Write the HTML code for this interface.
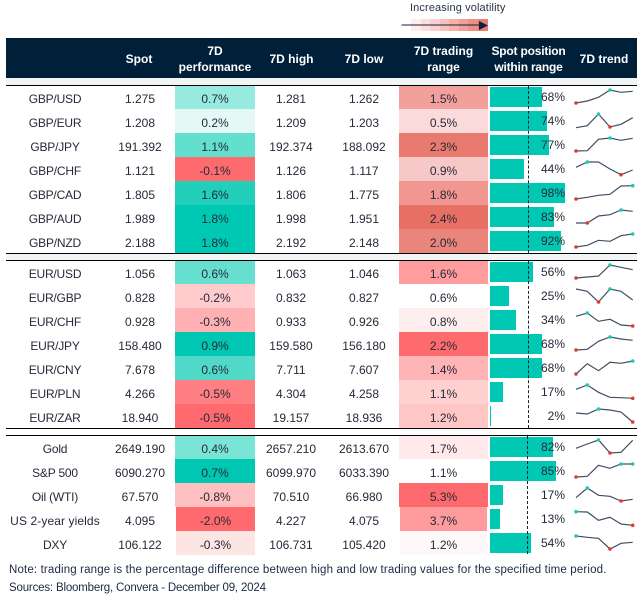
<!DOCTYPE html>
<html><head><meta charset="utf-8">
<style>
html,body{margin:0;padding:0;background:#fff;}
body{width:637px;height:599px;position:relative;overflow:hidden;font-family:"Liberation Sans",sans-serif;font-size:12px;color:#252a38;}
.h{position:absolute;top:38px;left:6px;width:631px;height:40px;background:#002039;}
.t{position:absolute;color:#fff;font-weight:bold;text-align:center;line-height:16px;white-space:nowrap;transform:translateX(-50%);}
.l{position:absolute;background:#000;left:6px;width:631px;height:1px;}
.r{position:absolute;left:0;width:637px;height:24px;}
.r span{position:absolute;white-space:nowrap;}
.a,.s,.g,.w,.p,.v{top:2px;height:24px;line-height:24px;text-align:center;}
.a{left:5px;width:100px;letter-spacing:-.2px;}
.s{left:100px;width:80px;}
.p{left:175px;width:80px;top:0;line-height:28px;height:24px;}
.g{left:251px;width:80px;}
.w{left:324px;width:80px;}
.v{left:399px;width:89px;top:0;line-height:28px;height:24px;}
.f .p,.f .v{top:1px;height:23px;line-height:26px;}
.b{left:490px;top:2px;height:20px;background:#00c8b3;}
.k{right:72px;top:0;line-height:24px;height:24px;}
.d{position:absolute;width:0;border-left:1px dashed #14233a;}
.n{position:absolute;left:9px;white-space:nowrap;color:#1c2a44;line-height:18px;}
svg{position:absolute;left:0;top:0;}
polyline{fill:none;stroke:#3f4f60;stroke-width:1.2;}
.x{fill:#e23b2e;}.y{fill:#1fc7b5;}
</style></head><body>

<div style="position:absolute;left:410px;top:1px;line-height:15px;white-space:nowrap;color:#2a3444;font-size:11px;letter-spacing:.12px">Increasing volatility</div>
<div style="position:absolute;top:19px;height:12px;left:411px;width:10px;background:#fdeeec"></div>
<div style="position:absolute;top:19px;height:12px;left:421px;width:9px;background:#fbdfdc"></div>
<div style="position:absolute;top:19px;height:12px;left:430px;width:10px;background:#f9d0cc"></div>
<div style="position:absolute;top:19px;height:12px;left:440px;width:9px;background:#f7c1bc"></div>
<div style="position:absolute;top:19px;height:12px;left:449px;width:10px;background:#f5b0aa"></div>
<div style="position:absolute;top:19px;height:12px;left:459px;width:9px;background:#f29f98"></div>
<div style="position:absolute;top:19px;height:12px;left:468px;width:10px;background:#ee8e85"></div>
<div style="position:absolute;top:19px;height:12px;left:478px;width:10px;background:#ea7d72"></div>

<div class="h"></div>
<div class="t" style="left:139px;top:51px">Spot</div>
<div class="t" style="left:215px;top:43px">7D<br>performance</div>
<div class="t" style="left:291.5px;top:51px">7D high</div>
<div class="t" style="left:364px;top:51px">7D low</div>
<div class="t" style="left:443.5px;top:43px">7D trading<br>range</div>
<div class="t" style="left:528.5px;top:43px;letter-spacing:-.2px">Spot position<br>within range</div>
<div class="t" style="left:604px;top:51px">7D trend</div>

<div style="position:absolute;left:6px;top:78px;width:631px;height:7px;background:#f2f5f5"></div>
<div style="position:absolute;left:6px;top:254px;width:631px;height:6px;background:#f2f5f5"></div>

<div class="r f" style="top:85px"><span class="a">GBP/USD</span><span class="s">1.275</span><span class="p" style="background:#97eadf">0.7%</span><span class="g">1.281</span><span class="w">1.262</span><span class="v" style="background:#f2a09b">1.5%</span><span class="b" style="width:52px"></span></div>
<div class="r" style="top:109px"><span class="a">GBP/EUR</span><span class="s">1.208</span><span class="p" style="background:#e4f9f6">0.2%</span><span class="g">1.209</span><span class="w">1.203</span><span class="v" style="background:#fadadb">0.5%</span><span class="b" style="width:57px"></span></div>
<div class="r" style="top:133px"><span class="a">GBP/JPY</span><span class="s">191.392</span><span class="p" style="background:#62dfcf">1.1%</span><span class="g">192.374</span><span class="w">188.092</span><span class="v" style="background:#e97a6f">2.3%</span><span class="b" style="width:59px"></span></div>
<div class="r" style="top:157px"><span class="a">GBP/CHF</span><span class="s">1.121</span><span class="p" style="background:#fd6b6e">-0.1%</span><span class="g">1.126</span><span class="w">1.117</span><span class="v" style="background:#f6c9c8">0.9%</span><span class="b" style="width:34px"></span></div>
<div class="r" style="top:181px"><span class="a">GBP/CAD</span><span class="s">1.805</span><span class="p" style="background:#22cfba">1.6%</span><span class="g">1.806</span><span class="w">1.775</span><span class="v" style="background:#f19690">1.8%</span><span class="b" style="width:75px"></span></div>
<div class="r" style="top:205px"><span class="a">GBP/AUD</span><span class="s">1.989</span><span class="p" style="background:#00c9b3">1.8%</span><span class="g">1.998</span><span class="w">1.951</span><span class="v" style="background:#e76f63">2.4%</span><span class="b" style="width:64px"></span></div>
<div class="r" style="top:229px"><span class="a">GBP/NZD</span><span class="s">2.188</span><span class="p" style="background:#00c9b3">1.8%</span><span class="g">2.192</span><span class="w">2.148</span><span class="v" style="background:#ea857b">2.0%</span><span class="b" style="width:71px"></span></div>

<div class="r f" style="top:260px"><span class="a">EUR/USD</span><span class="s">1.056</span><span class="p" style="background:#66dfd0">0.6%</span><span class="g">1.063</span><span class="w">1.046</span><span class="v" style="background:#ff9c9e">1.6%</span><span class="b" style="width:43px"></span></div>
<div class="r" style="top:284px"><span class="a">EUR/GBP</span><span class="s">0.828</span><span class="p" style="background:#ffcbcc">-0.2%</span><span class="g">0.832</span><span class="w">0.827</span><span class="v" style="background:#fff">0.6%</span><span class="b" style="width:19px"></span></div>
<div class="r" style="top:308px"><span class="a">EUR/CHF</span><span class="s">0.928</span><span class="p" style="background:#ffb0b2">-0.3%</span><span class="g">0.933</span><span class="w">0.926</span><span class="v" style="background:#ffeeee">0.8%</span><span class="b" style="width:26px"></span></div>
<div class="r" style="top:332px"><span class="a">EUR/JPY</span><span class="s">158.480</span><span class="p" style="background:#00c7b2">0.9%</span><span class="g">159.580</span><span class="w">156.180</span><span class="v" style="background:#fe6b6f">2.2%</span><span class="b" style="width:52px"></span></div>
<div class="r" style="top:356px"><span class="a">EUR/CNY</span><span class="s">7.678</span><span class="p" style="background:#50d9c8">0.6%</span><span class="g">7.711</span><span class="w">7.607</span><span class="v" style="background:#feb3b5">1.4%</span><span class="b" style="width:52px"></span></div>
<div class="r" style="top:380px"><span class="a">EUR/PLN</span><span class="s">4.266</span><span class="p" style="background:#ff7f82">-0.5%</span><span class="g">4.304</span><span class="w">4.258</span><span class="v" style="background:#ffd0d0">1.1%</span><span class="b" style="width:13px"></span></div>
<div class="r" style="top:404px"><span class="a">EUR/ZAR</span><span class="s">18.940</span><span class="p" style="background:#fe6a6e">-0.5%</span><span class="g">19.157</span><span class="w">18.936</span><span class="v" style="background:#ffc6c6">1.2%</span><span class="b" style="width:1px"></span></div>

<div class="r f" style="top:435px"><span class="a">Gold</span><span class="s">2649.190</span><span class="p" style="background:#7ae5d7">0.4%</span><span class="g">2657.210</span><span class="w">2613.670</span><span class="v" style="background:#ffe9ea">1.7%</span><span class="b" style="width:63px"></span></div>
<div class="r" style="top:459px"><span class="a">S&amp;P 500</span><span class="s">6090.270</span><span class="p" style="background:#00c7b2">0.7%</span><span class="g">6099.970</span><span class="w">6033.390</span><span class="v" style="background:#fff">1.1%</span><span class="b" style="width:66px"></span></div>
<div class="r" style="top:483px"><span class="a">Oil (WTI)</span><span class="s">67.570</span><span class="p" style="background:#fec0c1">-0.8%</span><span class="g">70.510</span><span class="w">66.980</span><span class="v" style="background:#fe696d">5.3%</span><span class="b" style="width:13px"></span></div>
<div class="r" style="top:507px"><span class="a" style="letter-spacing:.1px">US 2-year yields</span><span class="s">4.095</span><span class="p" style="background:#fe6a6e;left:176px;width:79px">-2.0%</span><span class="g">4.227</span><span class="w">4.075</span><span class="v" style="background:#fe9b9d;left:400px;width:87px">3.7%</span><span class="b" style="width:10px"></span></div>
<div class="r" style="top:531px"><span class="a">DXY</span><span class="s">106.122</span><span class="p" style="background:#fde5e4;left:176px;width:79px">-0.3%</span><span class="g">106.731</span><span class="w">105.420</span><span class="v" style="background:#fff8f9;left:400px;width:87px">1.2%</span><span class="b" style="width:41px"></span></div>

<div class="l" style="top:85px"></div>
<div class="l" style="top:253px"></div>
<div class="l" style="top:260px"></div>
<div class="l" style="top:428px"></div>
<div class="l" style="top:435px"></div>

<div class="d" style="left:528px;top:86px;height:167px"></div>
<div class="d" style="left:528px;top:261px;height:167px"></div>
<div class="d" style="left:527px;top:436px;height:118px"></div>

<div class="r" style="top:85px"><span class="k">68%</span></div>
<div class="r" style="top:109px"><span class="k">74%</span></div>
<div class="r" style="top:133px"><span class="k">77%</span></div>
<div class="r" style="top:157px"><span class="k">44%</span></div>
<div class="r" style="top:181px"><span class="k">98%</span></div>
<div class="r" style="top:205px"><span class="k">83%</span></div>
<div class="r" style="top:229px"><span class="k">92%</span></div>
<div class="r" style="top:260px"><span class="k">56%</span></div>
<div class="r" style="top:284px"><span class="k">25%</span></div>
<div class="r" style="top:308px"><span class="k">34%</span></div>
<div class="r" style="top:332px"><span class="k">68%</span></div>
<div class="r" style="top:356px"><span class="k">68%</span></div>
<div class="r" style="top:380px"><span class="k">17%</span></div>
<div class="r" style="top:404px"><span class="k">2%</span></div>
<div class="r" style="top:435px"><span class="k">82%</span></div>
<div class="r" style="top:459px"><span class="k">85%</span></div>
<div class="r" style="top:483px"><span class="k">17%</span></div>
<div class="r" style="top:507px"><span class="k">13%</span></div>
<div class="r" style="top:531px"><span class="k">54%</span></div>

<svg width="637" height="599" viewBox="0 0 637 599">
<polyline points="576,103 587.3,101 598.5,97.3 610,90 621,92.3 632.7,91.3"/><circle class="x" cx="576" cy="103" r="1.8"/><circle class="y" cx="610" cy="90" r="1.8"/>
<polyline points="576,127.7 587.3,125.7 598.5,114 610,127 621,124.3 632.7,117.7"/><circle class="x" cx="610" cy="127" r="1.8"/><circle class="y" cx="598.5" cy="114" r="1.8"/>
<polyline points="576,151 587.3,150.7 598.5,139.3 610,138 621,140.3 632.7,138.3"/><circle class="x" cx="576" cy="151" r="1.8"/><circle class="y" cx="610" cy="138" r="1.8"/>
<polyline points="576,167.3 587.3,162 598.5,162 610,169 621,174.7 632.7,170"/><circle class="x" cx="621" cy="174.7" r="1.8"/><circle class="y" cx="587.3" cy="162" r="1.8"/>
<polyline points="576,199 587.3,197.3 598.5,195.3 610,194.3 621,186 632.7,185.7"/><circle class="x" cx="576" cy="199" r="1.8"/><circle class="y" cx="632.7" cy="185.7" r="1.8"/>
<polyline points="576,223 587.3,223 598.5,216 610,214.7 621,210 632.7,211.3"/><circle class="x" cx="587.3" cy="223" r="1.8"/><circle class="y" cx="621" cy="210" r="1.8"/>
<polyline points="576,247 587.3,245.3 598.5,240.3 610,241.3 621,235.7 632.7,234"/><circle class="x" cx="576" cy="247" r="1.8"/><circle class="y" cx="632.7" cy="234" r="1.8"/>
<polyline points="576,278 587.3,277 598.5,276 610,265 621,267.3 632.7,269.7"/><circle class="x" cx="576" cy="278" r="1.8"/><circle class="y" cx="610" cy="265" r="1.8"/>
<polyline points="576,289 587.3,291.3 598.5,302 610,289 621,291.3 632.7,300"/><circle class="x" cx="598.5" cy="302" r="1.8"/><circle class="y" cx="610" cy="289" r="1.8"/>
<polyline points="576,316.3 587.3,313 598.5,321.3 610,319.3 621,325 632.7,326"/><circle class="x" cx="632.7" cy="326" r="1.8"/><circle class="y" cx="587.3" cy="313" r="1.8"/>
<polyline points="576,350 587.3,349.3 598.5,341.3 610,337 621,339 632.7,340.3"/><circle class="x" cx="576" cy="350" r="1.8"/><circle class="y" cx="610" cy="337" r="1.8"/>
<polyline points="576,374 587.3,363.7 598.5,370.7 610,362.3 621,363.3 632.7,361"/><circle class="x" cx="576" cy="374" r="1.8"/><circle class="y" cx="632.7" cy="361" r="1.8"/>
<polyline points="576,389.3 587.3,385 598.5,392.3 610,397.3 621,397.7 632.7,398.3"/><circle class="x" cx="632.7" cy="398.3" r="1.8"/><circle class="y" cx="587.3" cy="385" r="1.8"/>
<polyline points="576,413 587.3,414 598.5,409 610,410 621,412 632.7,422"/><circle class="x" cx="632.7" cy="422" r="1.8"/><circle class="y" cx="598.5" cy="409" r="1.8"/>
<polyline points="576,448.3 587.3,444 598.5,440 610,453 621,452.3 632.7,440.3"/><circle class="x" cx="610" cy="453" r="1.8"/><circle class="y" cx="598.5" cy="440" r="1.8"/>
<polyline points="576,477 587.3,476.3 598.5,465.3 610,468.3 621,464 632.7,464"/><circle class="x" cx="576" cy="477" r="1.8"/><circle class="y" cx="621" cy="464" r="1.8"/><circle class="y" cx="632.7" cy="464" r="1.8"/>
<polyline points="576,497.7 587.3,488 598.5,495.3 610,496.3 621,501 632.7,499.3"/><circle class="x" cx="621" cy="501" r="1.8"/><circle class="y" cx="587.3" cy="488" r="1.8"/>
<polyline points="576,511.7 587.3,512 598.5,520.3 610,517.3 621,524 632.7,525.3"/><circle class="x" cx="632.7" cy="525.3" r="1.8"/><circle class="y" cx="576" cy="511.7" r="1.8"/>
<polyline points="576,536 587.3,537.3 598.5,538.3 610,549 621,543.3 632.7,542.3"/><circle class="x" cx="610" cy="549" r="1.8"/><circle class="y" cx="576" cy="536" r="1.8"/>
<line x1="401.5" y1="25" x2="480" y2="25" stroke="#0b2340" stroke-width="1"/>
<polygon points="479,21 488,25.5 479,30" fill="#0b2340"/>
</svg>

<div class="n" style="top:561px;font-size:11.5px;letter-spacing:.15px">Note: trading range is the percentage difference between high and low trading values for the specified time period.</div>
<div class="n" style="top:579px;font-size:11.5px;letter-spacing:-.18px">Sources: Bloomberg, Convera - December 09, 2024</div>
</body></html>
